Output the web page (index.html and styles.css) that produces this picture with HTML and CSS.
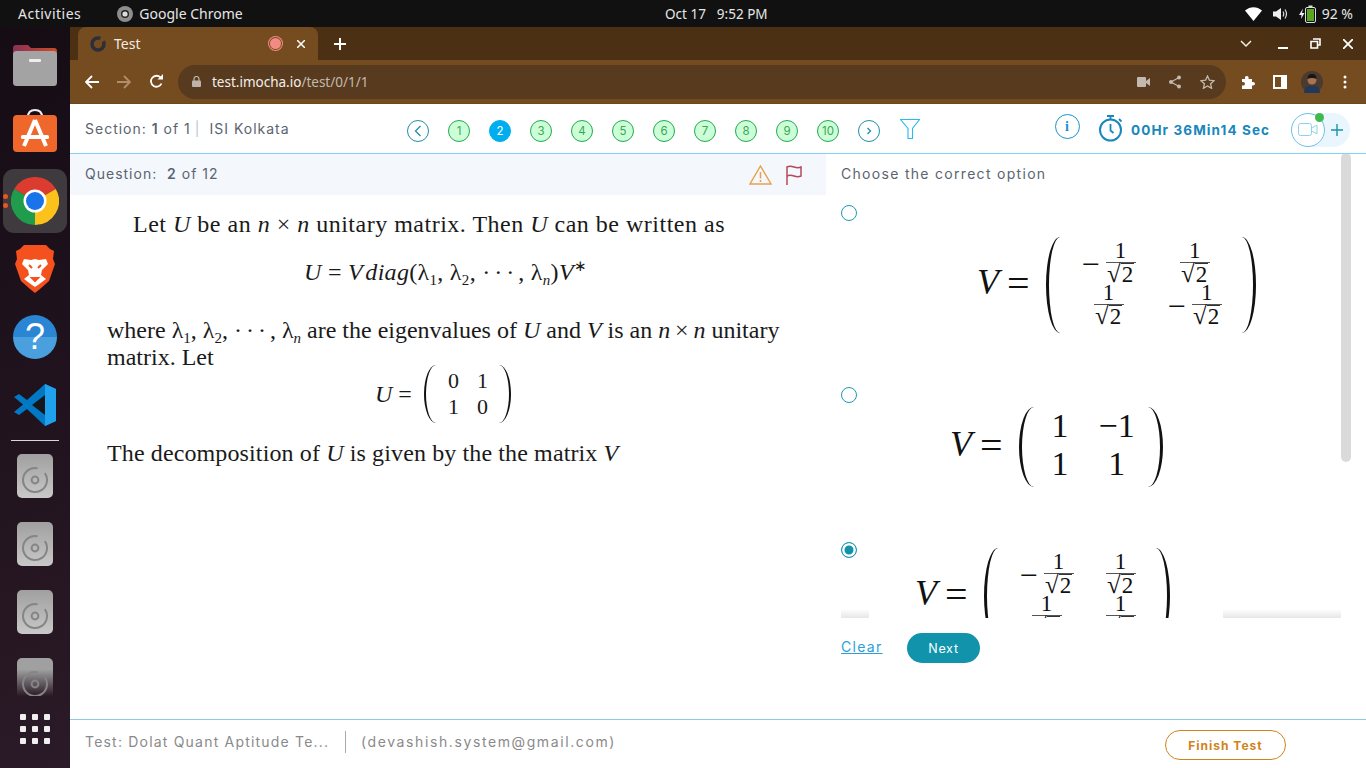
FILE: index.html
```html
<!DOCTYPE html>
<html lang="en">

<head>
    <meta charset="UTF-8">
    <title>Test</title>
    <link rel="stylesheet" href="styles.css">
</head>

<body>
<svg class="defs" width="0" height="0">
    <linearGradient id="lid" x1="0" x2="1" y1="0" y2="0">
        <stop offset="0" stop-color="#8a3056"/>
        <stop offset="1" stop-color="#cf4a26"/>
    </linearGradient>
    <symbol id="disk" viewBox="0 0 36 44">
        <circle cx="18" cy="26" r="12" fill="none" stroke="#858585" stroke-width="2" stroke-dasharray="66 10" transform="rotate(-35 18 26)"/>
        <circle cx="18" cy="26" r="3.400" fill="none" stroke="#858585" stroke-width="2"/>
    </symbol>
</svg>

<!-- top bar -->
<div class="topbar">
    <div class="topbar-left">
        <span class="activities">Activities</span>
        <svg class="chrome-mini" width="16" height="16" viewBox="0 0 16 16"><circle cx="8" cy="8" r="8" fill="#8d8d8d"/><circle cx="8" cy="8" r="4" fill="#222"/><circle cx="8" cy="8" r="2.600" fill="#ddd"/></svg>
        <span>Google Chrome</span>
    </div>
    <div class="topbar-clock"><span>Oct 17</span><span>9:52 PM</span></div>
    <div class="topbar-right">
        <svg width="17" height="14" viewBox="0 0 17 14"><path d="M0 3.500C5-1 12-1 17 3.500L8.500 14z" fill="#fff"/></svg>
        <svg width="15" height="14" viewBox="0 0 15 14"><path d="M0 4.500h3L8 1v12L3 9.500H0z" fill="#eee"/><path d="M10 4.500q1.500 2.500 0 5M12 2.500q3 4.500 0 9" fill="none" stroke="#ddd" stroke-width="1.200"/></svg>
        <svg width="17" height="18" viewBox="0 0 17 18"><path d="M4 3.500L0 10h2.500L2 14l3.500-6H3z" fill="#eee"/><rect x="6.500" y="2.500" width="10" height="15" rx="1.500" fill="none" stroke="#ddd"/><rect x="9.500" y="0.500" width="4" height="2" fill="#ddd"/><rect x="8" y="4" width="7" height="12" fill="#5ba51f"/></svg>
        <span>92 %</span>
    </div>
</div>

<div class="desktop">
    <!-- ubuntu dock -->
    <nav class="dock">
        <svg class="dock-folder" width="44" height="41" viewBox="0 0 44 41">
            <path d="M3 0h12l3 3h23q3 0 3 3v8H0V3q0-3 3-3z" fill="url(#lid)"/>
            <rect y="6" width="44" height="35" rx="3.500" fill="#a3a3a3"/>
            <rect x="16" y="14" width="12" height="3" rx="1" fill="#eee"/>
        </svg>
        <svg class="dock-store" width="44" height="43" viewBox="0 0 44 43">
            <path d="M15 8q0-7 7-7t7 7" fill="none" stroke="#eee" stroke-width="2"/>
            <rect y="6" width="44" height="37" rx="4" fill="#f0672b"/>
            <path d="M22 11L11 37M22 11l11 26" stroke="#fff" stroke-width="4" fill="none"/>
            <rect x="8" y="26" width="28" height="4" rx="1.500" fill="#fff"/>
        </svg>
        <div class="dock-active">
            <span class="run-dot"></span>
            <span class="run-dot"></span>
            <svg width="48" height="48" viewBox="0 0 48 48">
                <path d="M24 24L3.200 12A24 24 0 0 1 44.800 12z" fill="#dc3b2f"/>
                <path d="M24 24L44.800 12A24 24 0 0 1 24 48z" fill="#fcc21b"/>
                <path d="M24 24L24 48A24 24 0 0 1 3.200 12z" fill="#1f9d4d"/>
                <circle cx="24" cy="24" r="11.500" fill="#fff"/>
                <circle cx="24" cy="24" r="9" fill="#1a73e8"/>
            </svg>
        </div>
        <svg class="dock-brave" width="40" height="48" viewBox="0 0 40 48">
            <path d="M9 0h22l4 4 4 2-1 8 2 5-6 17-9 8-5 4-5-4-9-8L0 19l2-5-1-8 4-2z" fill="#f4511e"/>
            <path d="M9 14l7 1 4-1 4 1 7-1 2 5-6 6-1 5 5 4-8 6-3 2-3-2-8-6 5-4-1-5-6-6z" fill="#fff"/>
            <path d="M14 20l3 3M26 20l-3 3M17 33h6l-3 3z" stroke="#f4511e" stroke-width="2" fill="#f4511e"/>
        </svg>
        <div class="dock-help">?</div>
        <svg class="dock-code" width="42" height="42" viewBox="0 0 42 42">
            <path d="M31 0l11 5v32l-11 5-18-17-8 6-5-3 9-7.500L0 13l5-3 8 6z" fill="#0078c4"/>
            <path d="M31 0l11 5v32l-11 5z" fill="#20a1ee"/>
            <path d="M31 11L18 21l13 10z" fill="#14171c"/>
        </svg>
        <div class="dock-sep"></div>
        <div class="dock-disk"><svg width="36" height="44"><use href="#disk"/></svg></div>
        <div class="dock-disk"><svg width="36" height="44"><use href="#disk"/></svg></div>
        <div class="dock-disk"><svg width="36" height="44"><use href="#disk"/></svg></div>
        <div class="dock-disk last"><svg width="36" height="44"><use href="#disk"/></svg></div>
        <div class="dock-grid">
            <i></i><i></i><i></i><i></i><i></i><i></i><i></i><i></i><i></i>
        </div>
    </nav>

    <div class="browser">
        <!-- tab strip -->
        <div class="tabstrip">
            <div class="tab">
                <svg width="16" height="16" viewBox="0 0 16 16"><circle cx="8" cy="8" r="6" fill="none" stroke="#2c2f38" stroke-width="3.500" stroke-dasharray="30 4"/></svg>
                <span class="tab-title">Test</span>
                <span class="rec-dot"></span>
                <svg class="tab-x" width="8" height="8" viewBox="0 0 8 8"><path d="M0 0l8 8M8 0l-8 8" stroke="#fff" stroke-width="1.500"/></svg>
            </div>
            <svg class="new-tab" width="12" height="12" viewBox="0 0 12 12"><path d="M6 0v12M0 6h12" stroke="#fff" stroke-width="2"/></svg>
            <div class="win-controls">
                <svg width="12" height="8" viewBox="0 0 12 8"><path d="M1 1l5 5 5-5" stroke="#eee" stroke-width="1.500" fill="none"/></svg>
                <svg width="10" height="10" viewBox="0 0 10 10"><rect y="8" width="10" height="2" fill="#fff"/></svg>
                <svg width="11" height="11" viewBox="0 0 11 11"><path d="M3 1h7v6H8M1 3.500h6.500V10H1z" stroke="#fff" stroke-width="1.600" fill="none"/></svg>
                <svg width="10" height="10" viewBox="0 0 10 10"><path d="M0 0l10 10M10 0L0 10" stroke="#fff" stroke-width="1.800"/></svg>
            </div>
        </div>

        <!-- toolbar -->
        <div class="toolbar">
            <svg width="14" height="14" viewBox="0 0 14 14"><path d="M14 7H2M7 1L1 7l6 6" stroke="#fff" stroke-width="1.800" fill="none"/></svg>
            <svg width="14" height="14" viewBox="0 0 14 14"><path d="M0 7h12M7 1l6 6-6 6" stroke="#b08e6c" stroke-width="1.800" fill="none"/></svg>
            <svg width="15" height="15" viewBox="0 0 15 15"><path d="M12.500 9.500A5.500 5.500 0 1 1 11.500 3.500" stroke="#fff" stroke-width="1.800" fill="none"/><path d="M8.500 5.500H14V0z" fill="#fff"/></svg>
            <div class="omnibox">
                <svg width="9" height="11" viewBox="0 0 9 11"><path d="M2 5V3a2.500 2.500 0 0 1 5 0v2" stroke="#bdb3a8" fill="none" stroke-width="1.200"/><rect y="4.500" width="9" height="6.500" rx="1" fill="#bdb3a8"/></svg>
                <span class="url">test.imocha.io<span class="url-path">/test/0/1/1</span></span>
                <div class="omni-icons">
                    <svg width="13" height="10" viewBox="0 0 13 10"><rect width="9" height="10" rx="1" fill="#c4b9ae"/><path d="M9 4l4-3v8L9 6z" fill="#c4b9ae"/></svg>
                    <svg width="14" height="14" viewBox="0 0 14 14"><path d="M11 2.500L3 7l8 4.500" stroke="#c4b9ae" stroke-width="1.200" fill="none"/><circle cx="11" cy="2.500" r="2" fill="#c4b9ae"/><circle cx="3" cy="7" r="2" fill="#c4b9ae"/><circle cx="11" cy="11.500" r="2" fill="#c4b9ae"/></svg>
                    <svg width="15" height="14" viewBox="0 0 15 14"><path d="M7.500 1l1.900 4.200 4.600.5-3.400 3.100 1 4.500-4.100-2.400-4.100 2.400 1-4.500L1 5.700l4.600-.5z" stroke="#c4b9ae" stroke-width="1.300" fill="none"/></svg>
                </div>
            </div>
            <div class="ext-icons">
                <svg width="14" height="14" viewBox="0 0 14 14"><path d="M1 4h3q-.5-3 1.800-3T7.500 4H11v3q3-.5 3 1.800T11 10.500V14H1v-3.500q3 .5 3-1.800T1 7z" fill="#fff"/></svg>
                <svg width="14" height="14" viewBox="0 0 14 14"><rect x="1" y="1" width="12" height="12" fill="none" stroke="#fff" stroke-width="2"/><rect x="8" y="1" width="5" height="12" fill="#fff"/></svg>
                <svg class="avatar" width="22" height="22" viewBox="0 0 22 22"><circle cx="11" cy="11" r="11" fill="#4a3a30"/><circle cx="11" cy="9" r="4.500" fill="#a87554"/><path d="M6.500 8q0-5 4.500-5t4.500 5q-4.500-2-9 0z" fill="#1a1512"/><path d="M3 22q0-8 8-7 8-1 8 7z" fill="#20385a"/></svg>
                <svg width="4" height="14" viewBox="0 0 4 14"><circle cx="2" cy="2" r="1.500" fill="#fff"/><circle cx="2" cy="7" r="1.500" fill="#fff"/><circle cx="2" cy="12" r="1.500" fill="#fff"/></svg>
            </div>
        </div>

        <div class="page">
            <!-- section header -->
            <header class="page-head">
                <div class="section-info">
                    <span>Section: <b>1</b> of 1</span><span class="pipe">|</span><span class="section-name">ISI Kolkata</span>
                </div>
                <div class="pager">
                    <span class="pg pg-nav"><svg width="8" height="12" viewBox="0 0 8 12"><path d="M6.500 1L1.500 6l5 5" stroke="#1e8fa8" stroke-width="1.300" fill="none"/></svg></span>
                    <span class="pg">1</span>
                    <span class="pg current">2</span>
                    <span class="pg">3</span>
                    <span class="pg">4</span>
                    <span class="pg">5</span>
                    <span class="pg">6</span>
                    <span class="pg">7</span>
                    <span class="pg">8</span>
                    <span class="pg">9</span>
                    <span class="pg">10</span>
                    <span class="pg pg-nav"><svg width="6" height="8" viewBox="0 0 6 8"><path d="M1.500 1l3 3-3 3" stroke="#1e8fa8" stroke-width="1.300" fill="none"/></svg></span>
                    <svg class="funnel" width="20" height="20" viewBox="0 0 20 20"><path d="M.5.500h19l-7 9v10h-4.500v-10z" fill="none" stroke="#2bb9ee" stroke-width="1.100"/></svg>
                </div>
                <div class="head-right">
                    <span class="info-btn">i</span>
                    <svg class="stopwatch" width="24" height="27" viewBox="0 0 24 27"><circle cx="11.500" cy="15" r="10.500" fill="none" stroke="#1787bd" stroke-width="2"/><path d="M8 1h7M11.500 1v3.500M20 4l2.500 2.500M11.500 9v6.500l3 2.500" stroke="#1787bd" stroke-width="1.800" fill="none"/></svg>
                    <span class="timer">00Hr 36Min14 Sec</span>
                    <div class="cam-pill">
                        <span class="cam-circle">
                            <svg width="20" height="13" viewBox="0 0 20 13"><rect x=".5" y=".5" width="13" height="12" rx="2" fill="none" stroke="#8fd0ee"/><path d="M14 5l5-3v9l-5-3" fill="none" stroke="#8fd0ee"/></svg>
                        </span>
                        <span class="cam-dot"></span>
                        <svg class="cam-plus" width="12" height="12" viewBox="0 0 12 12"><path d="M6 0v12M0 6h12" stroke="#1a93a8" stroke-width="1.400"/></svg>
                    </div>
                </div>
            </header>

            <div class="content">
                <!-- question -->
                <section class="question">
                    <div class="q-head">
                        <span>Question: &nbsp;<b>2</b> of 12</span>
                        <div class="q-icons">
                            <svg width="23" height="20" viewBox="0 0 23 20"><path d="M11.500 1L22 19H1z" fill="none" stroke="#e8a04c" stroke-width="1.400"/><path d="M11.500 7v6.500M11.500 15v2" stroke="#e8a04c" stroke-width="1.500"/></svg>
                            <svg width="16" height="20" viewBox="0 0 16 20"><path d="M1 20V2q3-1.500 7 0t7 0v9q-3 1.500-7 0t-7 0" fill="none" stroke="#b5485a" stroke-width="1.500"/></svg>
                        </div>
                    </div>
                    <div class="q-body">
                        <p class="q-first">Let <i>U</i> be an <i>n</i> × <i>n</i> unitary matrix. Then <i>U</i> can be written as</p>
                        <p class="q-eq"><i>U</i> = <i>V&#8202;diag</i>(λ<sub>1</sub>, λ<sub>2</sub>, <span class="dots">···</span>, λ<sub><i>n</i></sub>)<i>V</i><sup>∗</sup></p>
                        <p class="q-para">where λ<sub>1</sub>, λ<sub>2</sub>, <span class="dots">···</span>, λ<sub><i>n</i></sub> are the eigenvalues of <i>U</i> and <i>V</i> is an <i>n</i>&#8201;×&#8201;<i>n</i> unitary matrix. Let</p>
                        <div class="q-matrix">
                            <i>U</i>&nbsp;=&nbsp;
                            <span class="paren"></span>
                            <span class="mat mat-small"><span>0</span><span>1</span><span>1</span><span>0</span></span>
                            <span class="paren right"></span>
                        </div>
                        <p class="q-last">The decomposition of <i>U</i> is given by the the matrix <i>V</i></p>
                    </div>
                </section>

                <!-- answers -->
                <section class="answers">
                    <div class="answers-main">
                        <div class="choose">Choose the correct option</div>
                        <div class="options">
                            <div class="option opt-a">
                                <span class="radio"></span>
                                <div class="math math-a">
                                    <i>V</i><span class="eq">=</span>
                                    <span class="paren tall"></span>
                                    <span class="mat mat-frac">
                                        <span><span class="minus">−</span><span class="frac"><span>1</span><span class="den">√<span class="rad">2</span></span></span></span>
                                        <span><span class="frac"><span>1</span><span class="den">√<span class="rad">2</span></span></span></span>
                                        <span><span class="frac"><span>1</span><span class="den">√<span class="rad">2</span></span></span></span>
                                        <span><span class="minus">−</span><span class="frac"><span>1</span><span class="den">√<span class="rad">2</span></span></span></span>
                                    </span>
                                    <span class="paren tall right"></span>
                                </div>
                            </div>
                            <div class="option opt-b">
                                <span class="radio"></span>
                                <div class="math math-b">
                                    <i>V</i><span class="eq">=</span>
                                    <span class="paren mid"></span>
                                    <span class="mat mat-big"><span>1</span><span>−1</span><span>1</span><span>1</span></span>
                                    <span class="paren mid right"></span>
                                </div>
                            </div>
                            <div class="option opt-c">
                                <span class="radio checked"></span>
                                <div class="math math-c">
                                    <i>V</i><span class="eq">=</span>
                                    <span class="paren tall"></span>
                                    <span class="mat mat-frac">
                                        <span><span class="minus">−</span><span class="frac"><span>1</span><span class="den">√<span class="rad">2</span></span></span></span>
                                        <span><span class="frac"><span>1</span><span class="den">√<span class="rad">2</span></span></span></span>
                                        <span><span class="frac"><span>1</span><span class="den">√<span class="rad">2</span></span></span></span>
                                        <span><span class="frac"><span>1</span><span class="den">√<span class="rad">2</span></span></span></span>
                                    </span>
                                    <span class="paren tall right"></span>
                                </div>
                            </div>
                        </div>
                        <div class="actions">
                            <a class="clear">Clear</a>
                            <button class="next">Next</button>
                        </div>
                    </div>
                    <div class="scrollbar"></div>
                </section>
            </div>

            <footer class="page-foot">
                <span class="test-name">Test: Dolat Quant Aptitude Te...</span>
                <span class="foot-sep"></span>
                <span class="test-mail">(devashish.system@gmail.com)</span>
                <button class="finish">Finish Test</button>
            </footer>
        </div>
    </div>
</div>
</body>

</html>
```

FILE: styles.css
```css
* {
    box-sizing: border-box;
}

body {
    margin: 0;
    width: 1366px;
    height: 768px;
    overflow: hidden;
    display: flex;
    flex-direction: column;
    font-family: "Inter", "Liberation Sans", sans-serif;
    background: #fff;
}

p {
    margin: 0;
}

.defs {
    position: absolute;
}

/* top bar */
.topbar {
    height: 27px;
    flex: none;
    background: #111;
    color: #e6e6e6;
    font-family: "Noto Sans", sans-serif;
    font-size: 14px;
    display: flex;
    align-items: center;
    justify-content: space-between;
    padding: 0 13px 0 18px;
    position: relative;
}

.topbar-left {
    display: flex;
    align-items: center;
}

.activities {
    margin-right: 36px;
    letter-spacing: .5px;
}

.chrome-mini {
    margin-right: 6px;
}

.topbar-clock {
    position: absolute;
    left: 665px;
    display: flex;
    gap: 11px;
    font-size: 13.5px;
}

.topbar-right {
    display: flex;
    align-items: center;
    gap: 11px;
}

.topbar-right span {
    margin-left: -5px;
}

/* dock */
.desktop {
    flex: 1;
    display: flex;
    min-height: 0;
}

.dock {
    width: 70px;
    flex: none;
    background: linear-gradient(160deg, #150c14, #2b1a27);
    display: flex;
    flex-direction: column;
    align-items: center;
    overflow: hidden;
}

.dock-folder {
    margin-top: 18px;
}

.dock-store {
    margin-top: 23px;
}

.dock-active {
    width: 64px;
    height: 64px;
    margin-top: 17px;
    border-radius: 11px;
    background: #3f3a3d;
    display: flex;
    align-items: center;
    justify-content: center;
    position: relative;
}

.run-dot {
    position: absolute;
    left: 0;
    top: 25px;
    width: 5px;
    height: 5px;
    border-radius: 50%;
    background: #e95420;
}

.run-dot + .run-dot {
    top: 34px;
}

.dock-brave {
    margin-top: 12px;
}

.dock-help {
    width: 44px;
    height: 44px;
    margin-top: 22px;
    border-radius: 50%;
    background: linear-gradient(#2a85d2 50%, #4a9fdf 50%);
    color: #fff;
    font: 36px/44px "Liberation Sans", sans-serif;
    text-align: center;
}

.dock-code {
    margin-top: 25px;
}

.dock-sep {
    width: 48px;
    height: 1px;
    margin-top: 14px;
    background: #d8d5d6;
    flex: none;
}

.dock-disk {
    width: 36px;
    height: 44px;
    margin-top: 24px;
    flex: none;
    border-radius: 5px;
    background: linear-gradient(#a0a0a0, #c8c8c8);
}

.dock-sep + .dock-disk {
    margin-top: 13px;
}

.dock-disk.last {
    height: 38px;
    border-radius: 5px 5px 0 0;
    overflow: hidden;
    background: linear-gradient(#a0a0a0 30%, #2a1a26);
}

.dock-grid {
    margin-top: 18px;
    display: grid;
    grid-template-columns: repeat(3, 6px);
    gap: 6px;
}

.dock-grid i {
    width: 6px;
    height: 6px;
    border-radius: 1px;
    background: #f0eeee;
}

/* browser chrome */
.browser {
    flex: 1;
    display: flex;
    flex-direction: column;
    min-width: 0;
}

.tabstrip {
    height: 33px;
    flex: none;
    background: #4c3014;
    display: flex;
    align-items: center;
    padding-left: 8px;
}

.tab {
    width: 240px;
    height: 33px;
    background: #754b20;
    border-radius: 8px 8px 0 0;
    display: flex;
    align-items: center;
    padding: 0 13px 0 12px;
    color: #f2ebe3;
    font-family: "Noto Sans", sans-serif;
    font-size: 14px;
}

.tab-title {
    margin-left: 8px;
    flex: 1;
}

.rec-dot {
    width: 11px;
    height: 11px;
    border-radius: 50%;
    background: #f28b82;
    box-shadow: 0 0 0 1px #754b20, 0 0 0 2px #f28b82;
    margin-right: 16px;
}

.new-tab {
    margin-left: 16px;
}

.win-controls {
    margin-left: auto;
    display: flex;
    align-items: center;
    gap: 22px;
    padding-right: 13px;
}

.win-controls svg:first-child {
    margin-right: 4px;
}

.toolbar {
    height: 44px;
    flex: none;
    background: #754b20;
    border-bottom: 1px solid #6a4623;
    display: flex;
    align-items: center;
    padding-left: 15px;
    gap: 18px;
}

.omnibox {
    width: 1048px;
    height: 34px;
    margin-left: -4px;
    border-radius: 17px;
    background: #583a1f;
    display: flex;
    align-items: center;
    padding: 0 11px 0 14px;
    font-family: "Noto Sans", sans-serif;
    font-size: 13.5px;
    color: #f4efe9;
}

.url {
    margin-left: 11px;
}

.url-path {
    color: #c4b9ae;
}

.omni-icons {
    margin-left: auto;
    display: flex;
    align-items: center;
    gap: 18px;
}

.ext-icons {
    display: flex;
    align-items: center;
    gap: 18px;
    margin-left: -3px;
}

.avatar {
    margin: 0 2px 0 -4px;
}

/* page */
.page {
    flex: 1;
    display: flex;
    flex-direction: column;
    min-height: 0;
    color: #5b6470;
}

.page-head {
    height: 50px;
    flex: none;
    border-bottom: 1px solid #7fd3f7;
    display: flex;
    align-items: center;
    padding-left: 15px;
    position: relative;
    font-size: 14px;
    letter-spacing: 1px;
}

.section-info {
    width: 322px;
    display: flex;
    align-items: center;
}

.section-info b {
    font-weight: 600;
}

.pipe {
    margin-left: 4px;
    color: #b5c6d4;
}

.section-name {
    margin-left: 9px;
}

.pager {
    display: flex;
    align-items: center;
    gap: 19px;
    margin-top: 4px;
}

.pg {
    width: 22px;
    height: 22px;
    flex: none;
    border-radius: 50%;
    border: 1px solid #22a94f;
    background: #ccffd8;
    color: #3aa655;
    font-size: 11.5px;
    letter-spacing: 0;
    display: flex;
    align-items: center;
    justify-content: center;
}

.pg.current {
    background: #00aef0;
    border-color: #00aef0;
    color: #fff;
}

.pg-nav {
    background: #fff;
    border-color: #1e8fa8;
}

.funnel {
    margin-left: 1px;
    margin-top: -4px;
}

.head-right {
    margin-left: auto;
    display: flex;
    align-items: center;
    padding-right: 16px;
}

.info-btn {
    width: 25px;
    height: 25px;
    margin-top: -4px;
    border-radius: 50%;
    border: 1px solid #1a93d0;
    color: #1a93d0;
    font: bold 14px/23px "Liberation Serif", serif;
    text-align: center;
}

.stopwatch {
    margin-left: 19px;
}

.timer {
    margin-left: 8px;
    margin-top: 3px;
    width: 160px;
    font-size: 13.5px;
    font-weight: 700;
    letter-spacing: 1.100px;
    color: #1787bd;
    white-space: nowrap;
}

.cam-pill {
    width: 59px;
    height: 34px;
    border-radius: 17px;
    background: #eaf6fd;
    position: relative;
    display: flex;
    align-items: center;
    margin-top: 2px;
}

.cam-circle {
    width: 34px;
    height: 34px;
    border-radius: 50%;
    background: #fff;
    border: 1px solid #6cc3e8;
    display: flex;
    align-items: center;
    justify-content: center;
}

.cam-dot {
    position: absolute;
    left: 24px;
    top: 0;
    width: 9px;
    height: 9px;
    border-radius: 50%;
    background: #3fb950;
}

.cam-plus {
    margin-left: 6px;
}

.content {
    flex: 1;
    display: flex;
    min-height: 0;
}

/* question side */
.question {
    width: 756px;
    flex: none;
}

.q-head {
    height: 39px;
    margin-bottom: 2px;
    box-shadow: 0 2px 0 #f4f8fd;
    background: #f4f8fd;
    display: flex;
    align-items: center;
    justify-content: space-between;
    padding: 0 24px 0 15px;
    font-size: 14px;
    letter-spacing: 1px;
}

.q-head b {
    font-weight: 600;
}

.q-icons {
    display: flex;
    align-items: center;
    gap: 14px;
    padding-top: 2px;
}

.q-body {
    padding: 16px 0 0 37px;
    color: #1a1a1a;
    font-family: "Liberation Serif", serif;
    font-size: 24px;
    line-height: 27px;
    width: 720px;
}

.q-body sub {
    font-size: 15px;
    line-height: 0;
    vertical-align: -5px;
}

.q-body sup {
    font-size: 15px;
    line-height: 0;
}

.dots {
    letter-spacing: 4px;
}

.q-first {
    padding-left: 26px;
    letter-spacing: .5px;
}

.q-eq {
    margin-top: 21px;
    padding-left: 197px;
    white-space: nowrap;
    letter-spacing: .3px;
}

.q-para {
    margin-top: 31px;
}

.q-matrix {
    display: flex;
    align-items: center;
    padding-left: 268px;
    margin-top: -7px;
    height: 60px;
}

.q-matrix .paren:not(.right) {
    margin-left: 6px;
}

.q-last {
    margin-top: 16px;
    letter-spacing: .12px;
}

/* math blocks */
.paren {
    width: 24px;
    height: 58px;
    flex: none;
    border-left: 2.500px solid #111;
    border-radius: 50%;
}

.paren.right {
    border-left: 0;
    border-right: 2.500px solid #111;
}

.paren.mid {
    width: 30px;
    height: 80px;
    border-width: 3px;
}

.paren.tall {
    width: 28px;
    height: 96px;
    border-width: 3.500px;
}

.mat {
    display: grid;
    grid-template-columns: auto auto;
    text-align: center;
}

.mat-small {
    margin: 0 -1px 0 0;
    column-gap: 18px;
    line-height: 26px;
    font-size: 22px;
}

.math {
    display: flex;
    align-items: center;
    color: #111;
    font-family: "Liberation Serif", serif;
    background: #fff;
    font-size: 36px;
}

.math > i {
    margin-top: -6px;
}

.eq {
    font-size: 40px;
    margin: -4px 16px 0 8px;
}

.mat-big {
    margin: -4px -2px 0 3px;
    column-gap: 30px;
    row-gap: 0;
    line-height: 38px;
    font-size: 34px;
}

.mat-frac {
    font-size: 23px;
    line-height: 19px;
    column-gap: 32px;
    margin: 0 6px 0 8px;
    justify-items: center;
}

.mat-frac > span {
    display: flex;
    align-items: center;
}

.minus {
    font-size: 32px;
    margin-right: 6px;
}

.frac {
    display: inline-flex;
    flex-direction: column;
    align-items: center;
    width: 30px;
}

.frac > span:first-child {
    line-height: 15px;
    padding-bottom: 4px;
}

.den {
    width: 100%;
    border-top: 1px solid #555;
    display: flex;
    justify-content: center;
    font-size: 25px;
    line-height: 21px;
    height: 23px;
}

.rad {
    border-top: 1px solid #333;
    font-size: 23px;
    line-height: 22px;
    height: 20px;
    padding: 0 1px;
}

/* answers side */
.answers {
    flex: 1;
    display: flex;
    min-width: 0;
}

.answers-main {
    width: 515px;
    padding-left: 15px;
    flex: none;
}

.choose {
    height: 39px;
    margin-bottom: 2px;
    display: flex;
    align-items: center;
    font-size: 14px;
    letter-spacing: 1.300px;
}

.options {
    height: 423px;
    overflow: hidden;
    position: relative;
}

.options::after {
    content: "";
    position: absolute;
    left: 0;
    right: 0;
    bottom: 0;
    height: 9px;
    background: linear-gradient(#fff, #e6e6e6);
}

.option {
    display: flex;
    position: relative;
    padding-top: 10px;
}

.opt-a {
    height: 182px;
}

.opt-b {
    height: 155px;
}

.opt-c {
    height: 160px;
}

.radio {
    width: 16px;
    height: 16px;
    flex: none;
    border-radius: 50%;
    border: 1.500px solid #1d9ab0;
    background: #fff;
}

.radio.checked {
    background: #1093ab;
    box-shadow: inset 0 0 0 2.500px #fff;
}

.math-a {
    margin: 30px 0 0 120px;
    height: 100px;
}

.math-b {
    margin: 10px 0 0 93px;
    height: 100px;
}

.math-c {
    position: relative;
    z-index: 1;
    width: 354px;
    margin: -1px 0 0 12px;
    padding-left: 46px;
    height: 110px;
    align-self: flex-start;
}

.actions {
    margin-top: 15px;
    display: flex;
    align-items: center;
}

.clear {
    width: 66px;
    margin-top: -3px;
    color: #2a9fd8;
    font-size: 14px;
    letter-spacing: 1.300px;
    text-decoration: underline;
}

.next {
    width: 73px;
    height: 30px;
    border: 0;
    border-radius: 15px;
    background: #1093ab;
    color: #fff;
    font-family: inherit;
    font-size: 12.5px;
    letter-spacing: .7px;
}

.scrollbar {
    width: 10px;
    height: 309px;
    margin-top: -1px;
    border-radius: 5px;
    background: #dadada;
}

/* footer */
.page-foot {
    height: 49px;
    flex: none;
    border-top: 1px solid #8ccbe8;
    display: flex;
    align-items: center;
    padding: 0 0 5px 15px;
    color: #8a8a8a;
    font-size: 14px;
    letter-spacing: 1.200px;
}

.test-name {
    width: 244px;
    white-space: nowrap;
}

.foot-sep {
    width: 1px;
    height: 22px;
    background: #aaa;
    margin: 0 15px 0 16px;
}

.test-mail {
    letter-spacing: 1.600px;
}

.finish {
    margin-left: auto;
    margin-right: 80px;
    margin-top: 7px;
    width: 121px;
    height: 30px;
    border: 1px solid #d0831a;
    border-radius: 15px;
    background: #fff;
    color: #d0831a;
    font-family: inherit;
    font-weight: 700;
    font-size: 12px;
    letter-spacing: 1px;
}
```
